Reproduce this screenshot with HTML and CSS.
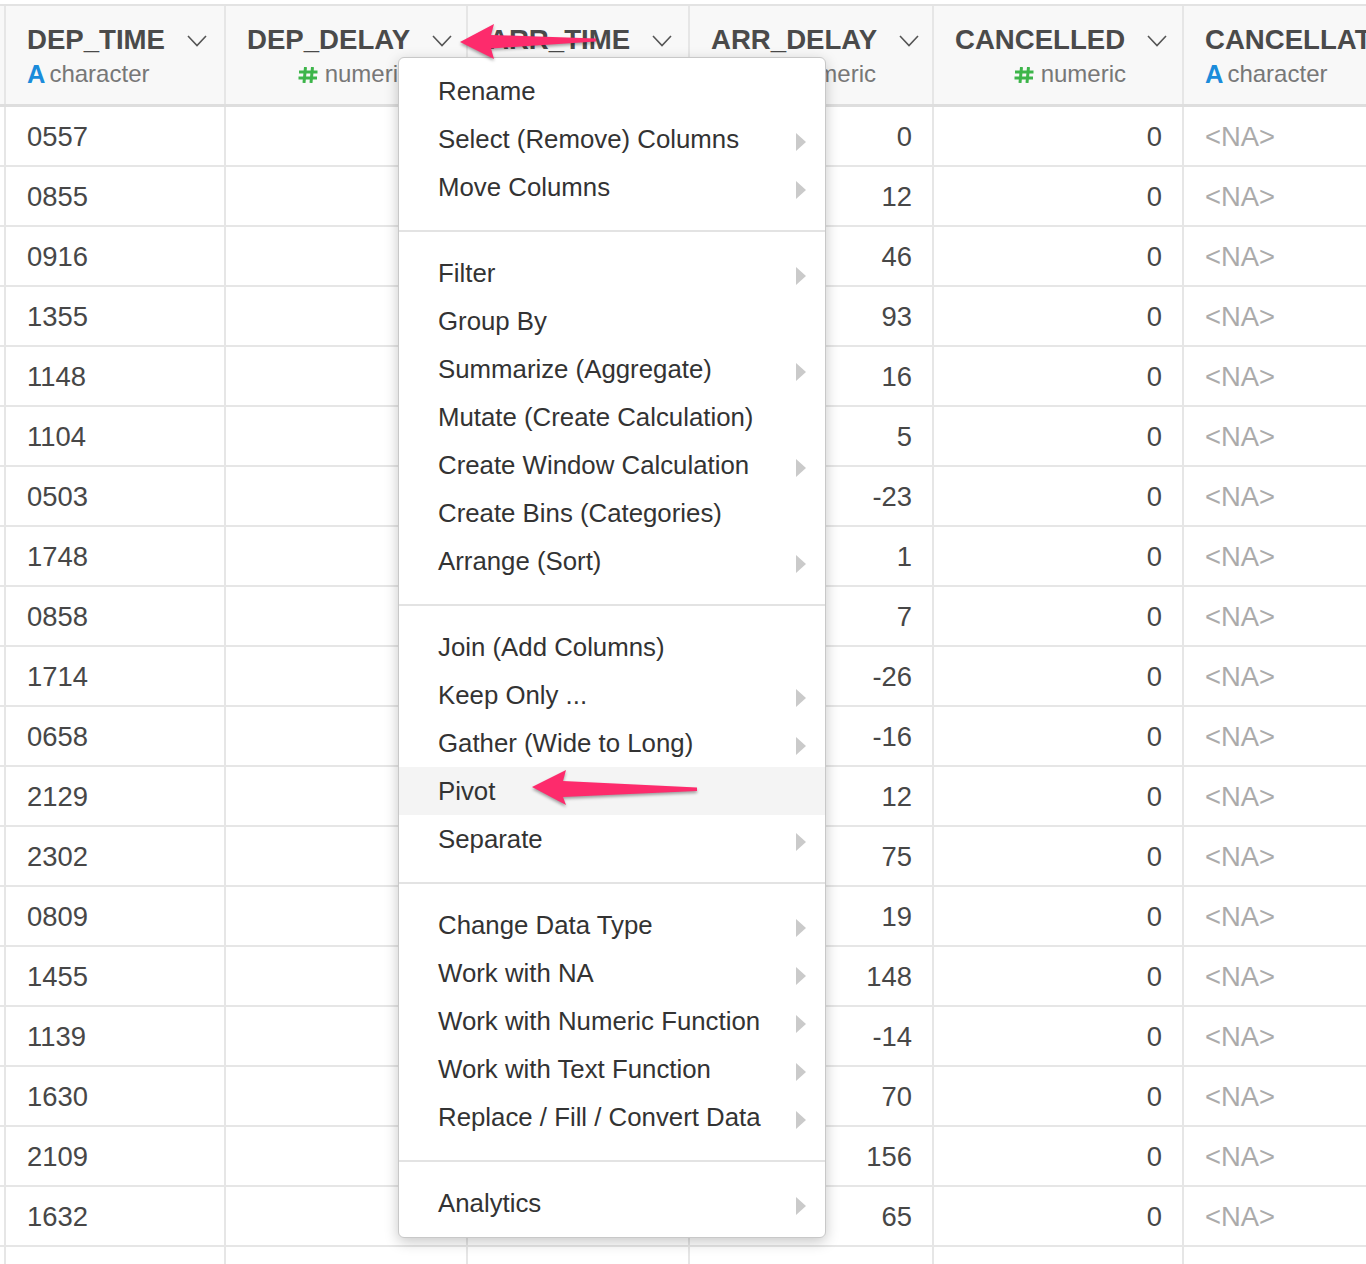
FILE: index.html
```html
<!DOCTYPE html>
<html>
<head>
<meta charset="utf-8">
<link rel="stylesheet" href="styles.css">
</head>
<body>
<div class="grid">
  <div class="hrow">
    <div class="c c0"></div>
    <div class="c c1 h">
      <div class="hname"><span>DEP_TIME</span><svg class="chev" width="20" height="12" viewBox="0 0 20 12"><path d="M1 1 L10 10.5 L19 1"/></svg></div>
      <div class="htype"><span class="ta">A</span>character</div>
    </div>
    <div class="c c2 h">
      <div class="hname"><span>DEP_DELAY</span><svg class="chev" width="20" height="12" viewBox="0 0 20 12"><path d="M1 1 L10 10.5 L19 1"/></svg></div>
      <div class="htype num"><svg class="hash" width="20" height="16" viewBox="0 0 20 16"><path d="M7.5 0 L6 16 M14.5 0 L13 16 M1 5 H19.5 M0.5 11 H19"/></svg>numeric</div>
    </div>
    <div class="c c3 h">
      <div class="hname"><span>ARR_TIME</span><svg class="chev" width="20" height="12" viewBox="0 0 20 12"><path d="M1 1 L10 10.5 L19 1"/></svg></div>
      <div class="htype"></div>
    </div>
    <div class="c c4 h">
      <div class="hname"><span>ARR_DELAY</span><svg class="chev" width="20" height="12" viewBox="0 0 20 12"><path d="M1 1 L10 10.5 L19 1"/></svg></div>
      <div class="htype num"><svg class="hash" width="20" height="16" viewBox="0 0 20 16"><path d="M7.5 0 L6 16 M14.5 0 L13 16 M1 5 H19.5 M0.5 11 H19"/></svg>numeric</div>
    </div>
    <div class="c c5 h">
      <div class="hname"><span>CANCELLED</span><svg class="chev" width="20" height="12" viewBox="0 0 20 12"><path d="M1 1 L10 10.5 L19 1"/></svg></div>
      <div class="htype num"><svg class="hash" width="20" height="16" viewBox="0 0 20 16"><path d="M7.5 0 L6 16 M14.5 0 L13 16 M1 5 H19.5 M0.5 11 H19"/></svg>numeric</div>
    </div>
    <div class="c c6 h">
      <div class="hname"><span>CANCELLAT</span></div>
      <div class="htype"><span class="ta">A</span>character</div>
    </div>
  </div>

  <div class="row"><div class="c c0"></div><div class="c c1 d">0557</div><div class="c c2 d"></div><div class="c c3 d"></div><div class="c c4 d r">0</div><div class="c c5 d r">0</div><div class="c c6 d na">&lt;NA&gt;</div></div>
  <div class="row"><div class="c c0"></div><div class="c c1 d">0855</div><div class="c c2 d"></div><div class="c c3 d"></div><div class="c c4 d r">12</div><div class="c c5 d r">0</div><div class="c c6 d na">&lt;NA&gt;</div></div>
  <div class="row"><div class="c c0"></div><div class="c c1 d">0916</div><div class="c c2 d"></div><div class="c c3 d"></div><div class="c c4 d r">46</div><div class="c c5 d r">0</div><div class="c c6 d na">&lt;NA&gt;</div></div>
  <div class="row"><div class="c c0"></div><div class="c c1 d">1355</div><div class="c c2 d"></div><div class="c c3 d"></div><div class="c c4 d r">93</div><div class="c c5 d r">0</div><div class="c c6 d na">&lt;NA&gt;</div></div>
  <div class="row"><div class="c c0"></div><div class="c c1 d">1148</div><div class="c c2 d"></div><div class="c c3 d"></div><div class="c c4 d r">16</div><div class="c c5 d r">0</div><div class="c c6 d na">&lt;NA&gt;</div></div>
  <div class="row"><div class="c c0"></div><div class="c c1 d">1104</div><div class="c c2 d"></div><div class="c c3 d"></div><div class="c c4 d r">5</div><div class="c c5 d r">0</div><div class="c c6 d na">&lt;NA&gt;</div></div>
  <div class="row"><div class="c c0"></div><div class="c c1 d">0503</div><div class="c c2 d"></div><div class="c c3 d"></div><div class="c c4 d r">-23</div><div class="c c5 d r">0</div><div class="c c6 d na">&lt;NA&gt;</div></div>
  <div class="row"><div class="c c0"></div><div class="c c1 d">1748</div><div class="c c2 d"></div><div class="c c3 d"></div><div class="c c4 d r">1</div><div class="c c5 d r">0</div><div class="c c6 d na">&lt;NA&gt;</div></div>
  <div class="row"><div class="c c0"></div><div class="c c1 d">0858</div><div class="c c2 d"></div><div class="c c3 d"></div><div class="c c4 d r">7</div><div class="c c5 d r">0</div><div class="c c6 d na">&lt;NA&gt;</div></div>
  <div class="row"><div class="c c0"></div><div class="c c1 d">1714</div><div class="c c2 d"></div><div class="c c3 d"></div><div class="c c4 d r">-26</div><div class="c c5 d r">0</div><div class="c c6 d na">&lt;NA&gt;</div></div>
  <div class="row"><div class="c c0"></div><div class="c c1 d">0658</div><div class="c c2 d"></div><div class="c c3 d"></div><div class="c c4 d r">-16</div><div class="c c5 d r">0</div><div class="c c6 d na">&lt;NA&gt;</div></div>
  <div class="row"><div class="c c0"></div><div class="c c1 d">2129</div><div class="c c2 d"></div><div class="c c3 d"></div><div class="c c4 d r">12</div><div class="c c5 d r">0</div><div class="c c6 d na">&lt;NA&gt;</div></div>
  <div class="row"><div class="c c0"></div><div class="c c1 d">2302</div><div class="c c2 d"></div><div class="c c3 d"></div><div class="c c4 d r">75</div><div class="c c5 d r">0</div><div class="c c6 d na">&lt;NA&gt;</div></div>
  <div class="row"><div class="c c0"></div><div class="c c1 d">0809</div><div class="c c2 d"></div><div class="c c3 d"></div><div class="c c4 d r">19</div><div class="c c5 d r">0</div><div class="c c6 d na">&lt;NA&gt;</div></div>
  <div class="row"><div class="c c0"></div><div class="c c1 d">1455</div><div class="c c2 d"></div><div class="c c3 d"></div><div class="c c4 d r">148</div><div class="c c5 d r">0</div><div class="c c6 d na">&lt;NA&gt;</div></div>
  <div class="row"><div class="c c0"></div><div class="c c1 d">1139</div><div class="c c2 d"></div><div class="c c3 d"></div><div class="c c4 d r">-14</div><div class="c c5 d r">0</div><div class="c c6 d na">&lt;NA&gt;</div></div>
  <div class="row"><div class="c c0"></div><div class="c c1 d">1630</div><div class="c c2 d"></div><div class="c c3 d"></div><div class="c c4 d r">70</div><div class="c c5 d r">0</div><div class="c c6 d na">&lt;NA&gt;</div></div>
  <div class="row"><div class="c c0"></div><div class="c c1 d">2109</div><div class="c c2 d"></div><div class="c c3 d"></div><div class="c c4 d r">156</div><div class="c c5 d r">0</div><div class="c c6 d na">&lt;NA&gt;</div></div>
  <div class="row"><div class="c c0"></div><div class="c c1 d">1632</div><div class="c c2 d"></div><div class="c c3 d"></div><div class="c c4 d r">65</div><div class="c c5 d r">0</div><div class="c c6 d na">&lt;NA&gt;</div></div>
  <div class="row"><div class="c c0"></div><div class="c c1 d"></div><div class="c c2 d"></div><div class="c c3 d"></div><div class="c c4 d r"></div><div class="c c5 d r"></div><div class="c c6 d na"></div></div>
</div>

<div class="menu">
  <div class="item"><span>Rename</span></div>
  <div class="item"><span>Select (Remove) Columns</span><i class="tri"></i></div>
  <div class="item"><span>Move Columns</span><i class="tri"></i></div>
  <div class="sep"></div>
  <div class="item"><span>Filter</span><i class="tri"></i></div>
  <div class="item"><span>Group By</span></div>
  <div class="item"><span>Summarize (Aggregate)</span><i class="tri"></i></div>
  <div class="item"><span>Mutate (Create Calculation)</span></div>
  <div class="item"><span>Create Window Calculation</span><i class="tri"></i></div>
  <div class="item"><span>Create Bins (Categories)</span></div>
  <div class="item"><span>Arrange (Sort)</span><i class="tri"></i></div>
  <div class="sep"></div>
  <div class="item"><span>Join (Add Columns)</span></div>
  <div class="item"><span>Keep Only ...</span><i class="tri"></i></div>
  <div class="item"><span>Gather (Wide to Long)</span><i class="tri"></i></div>
  <div class="item hl"><span>Pivot</span></div>
  <div class="item"><span>Separate</span><i class="tri"></i></div>
  <div class="sep"></div>
  <div class="item"><span>Change Data Type</span><i class="tri"></i></div>
  <div class="item"><span>Work with NA</span><i class="tri"></i></div>
  <div class="item"><span>Work with Numeric Function</span><i class="tri"></i></div>
  <div class="item"><span>Work with Text Function</span><i class="tri"></i></div>
  <div class="item"><span>Replace / Fill / Convert Data</span><i class="tri"></i></div>
  <div class="sep"></div>
  <div class="item"><span>Analytics</span><i class="tri"></i></div>
</div>

<svg class="arrows" width="1366" height="1264" viewBox="0 0 1366 1264">
  <polygon points="460,42 494,24 491,35 596,38.5 596,41.5 491,48.5 494,59"/>
  <polygon points="532,787 566,770 563,781 697,787.5 697,791 563,797 566,805"/>
</svg>
</body>
</html>
```

FILE: styles.css
```css
* { box-sizing: border-box; }
html, body {
  margin: 0;
  padding: 0;
  width: 1366px;
  height: 1264px;
  overflow: hidden;
  background: #fff;
  font-family: "Liberation Sans", Arial, Helvetica, sans-serif;
}
.grid {
  margin-top: 4px;
  border-top: 2px solid #e3e3e3;
  width: 1366px;
  overflow: hidden;
}
.hrow, .row {
  display: flex;
}
.hrow {
  height: 101px;
  background: #f8f8f8;
  border-bottom: 3px solid #dedede;
}
.row {
  height: 60px;
  border-bottom: 2px solid #e6e6e6;
}
.c {
  flex: none;
  border-left: 2px solid #e6e6e6;
  white-space: nowrap;
  overflow: hidden;
}
.c0 { width: 4px; border-left: none; }
.c1 { width: 220px; }
.c2 { width: 242px; }
.c3 { width: 222px; }
.c4 { width: 244px; }
.c5 { width: 250px; }
.c6 { width: 184px; }
.h {
  padding: 18px 0 0 21px;
}
.hname {
  display: flex;
  align-items: center;
  height: 32px;
  font-size: 27.6px;
  font-weight: bold;
  color: #4a4a4a;
  overflow: hidden;
}
.chev {
  margin-left: 22px;
  margin-top: 2px;
  flex: none;
}
.chev path {
  fill: none;
  stroke: #555;
  stroke-width: 1.6;
}
.htype {
  display: flex;
  align-items: center;
  height: 28px;
  margin-top: 4px;
  font-size: 24px;
  color: #777;
}
.htype.num {
  justify-content: flex-end;
  padding-right: 56px;
}
.ta {
  font-weight: bold;
  font-size: 25.5px;
  color: #1b8cdb;
  margin-right: 4px;
}
.hash {
  margin-right: 7px;
  margin-top: 1px;
}
.hash path {
  stroke: #3db54a;
  stroke-width: 3;
  fill: none;
}
.d {
  line-height: 59px;
  font-size: 27.4px;
  color: #474747;
  padding: 0 20px 0 21px;
}
.d.r { text-align: right; }
.d.na { color: #ababab; }

.menu {
  position: absolute;
  left: 398px;
  top: 57px;
  width: 428px;
  height: 1181px;
  background: #fff;
  border: 1px solid #c8c8c8;
  border-radius: 6px;
  box-shadow: 0 4px 14px rgba(0, 0, 0, 0.22);
  padding: 9px 0 10px;
}
.item {
  display: flex;
  align-items: center;
  height: 48px;
  padding: 0 19px 0 39px;
  font-size: 25.8px;
  color: #333;
  white-space: nowrap;
}
.item.hl { background: #f4f4f4; }
.tri {
  margin-left: auto;
  margin-top: 6px;
  flex: none;
  width: 0;
  height: 0;
  border-left: 10px solid #cacaca;
  border-top: 9px solid transparent;
  border-bottom: 9px solid transparent;
}
.sep {
  height: 2px;
  background: #e3e3e3;
  margin: 19px 0 17px;
}
.arrows {
  position: absolute;
  left: 0;
  top: 0;
  pointer-events: none;
  filter: drop-shadow(0 2px 1.5px rgba(0, 0, 0, 0.35));
}
.arrows polygon {
  fill: #fd2b6c;
}
```
